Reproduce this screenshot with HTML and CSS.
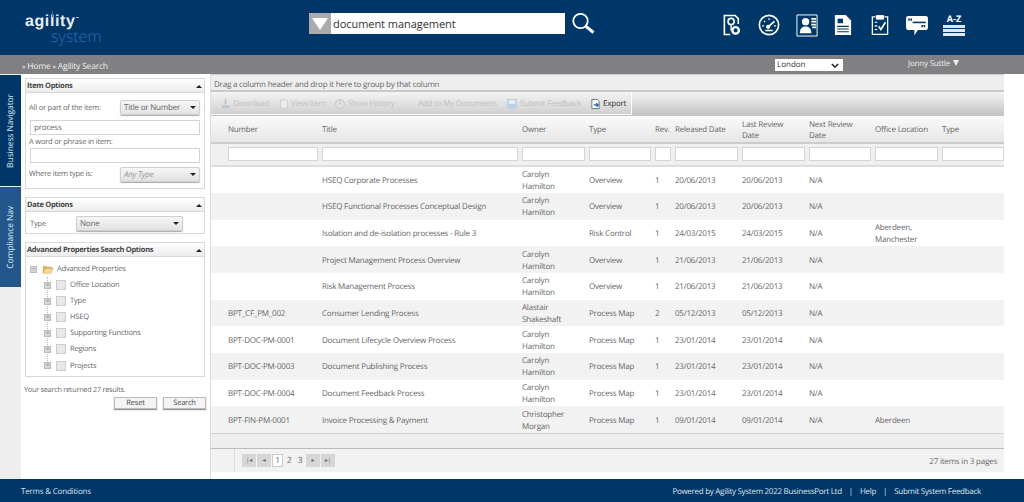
FILE: index.html
```html
<!DOCTYPE html>
<html lang="en">
<head>
    <meta charset="UTF-8">
    <title>Agility Search</title>
    <link rel="stylesheet" href="styles.css">
</head>
<body>
    <header class="top-bar">
        <div class="logo">
            <div class="logo-main">agility<span class="logo-tm"></span></div>
            <div class="logo-sub">system</div>
        </div>
        <div class="search-box">
            <div class="search-drop"><span class="search-arrow"></span></div>
            <div class="search-text">document management</div>
            <svg class="search-icon" viewBox="0 0 24 24" width="24" height="24" fill="none" stroke="#fff"><circle cx="9.5" cy="9" r="7.2" stroke-width="1.8"/><path d="M15 14.500l7.500 6" stroke-width="3"/></svg>
        </div>
        <nav class="top-icons">
            <svg class="icon-a" viewBox="0 0 20 24" width="18" height="22" fill="none" stroke="#fff" stroke-width="1.800"><path d="M8 22.500H1.500V1.500h12l3.500 3.500v6"/><circle cx="9" cy="8" r="3.400"/><circle cx="14" cy="18" r="3.600" stroke-width="2.600"/><path d="M9 12v6" stroke-width="1.500"/></svg>
            <svg class="icon-b" viewBox="0 0 24 24" width="22" height="22" fill="none" stroke="#fff"><circle cx="12" cy="12" r="10.500" stroke-width="1.800"/><path d="M11 14l7-6" stroke-width="2"/><circle cx="11" cy="14" r="1.800" fill="#fff"/><path d="M4.500 13h2M12 4.500v2M6.500 7.500l1.400 1.400M17.500 13h2M8 18h8" stroke-width="1.400"/></svg>
            <svg class="icon-c" viewBox="0 0 24 24" width="23" height="23" fill="none" stroke="#fff"><path d="M1 1h21v22H1z" stroke-width="1"/><circle cx="10" cy="8" r="3.800" fill="#fff" stroke="none"/><path d="M4 20c0-5.500 3-7 6-7s6 1.500 6 7z" fill="#fff" stroke="none"/><path d="M16 5h5M16 8h5M16 11h5M17 14h4" stroke-width="1.800"/></svg>
            <svg class="icon-d" viewBox="0 0 20 24" width="18" height="22" fill="#fff"><path d="M1 1h12l6 6v16H1z"/><path d="M4 5h6v5H4z" fill="#003768"/><path d="M3.500 13.500h13M3.500 16.500h13M3.500 19.500h13" stroke="#003768" stroke-width="1.200"/></svg>
            <svg class="icon-e" viewBox="0 0 20 24" width="18" height="22" fill="none" stroke="#fff"><path d="M5 3H1.500v19.500h17V3H15" stroke-width="1.400"/><path d="M6 1.500h8v4H6z" fill="#fff"/><path d="M4 9h3M4 13h3M4 17h3" stroke-width="1.200"/><path d="M8.500 13.500l2.500 3.500 5-8" stroke-width="1.800"/></svg>
            <svg class="icon-f" viewBox="0 0 26 24" width="24" height="21" fill="#fff"><path d="M3 1h20q2.500 0 2.500 2.500v11q0 2.500-2.500 2.500H14l-4 6v-6H3Q.5 17 .5 14.500v-11Q.5 1 3 1z"/><path d="M8 8.500h15" stroke="#003768" stroke-width="1.800"/><path d="M3 4h1.800v2.500H3zM5.500 4h1.800v2.500H5.500zM18 11.500h1.800V14H18zM20.500 11.500h1.800V14h-1.800z" fill="#003768"/></svg>
            <div class="az-icon">
                <div class="az-text">A-Z</div>
                <div class="az-bar"></div>
                <div class="az-bar"></div>
                <div class="az-bar"></div>
            </div>
        </nav>
    </header>

    <div class="crumb-bar">
        <div class="crumbs"><span class="crumb-sep">»</span> Home <span class="crumb-sep">»</span> Agility Search</div>
        <div class="site-select">London<svg viewBox="0 0 10 6" width="8" height="5" fill="none" stroke="#222" stroke-width="1.800"><path d="M1 1l4 4 4-4"/></svg></div>
        <div class="user-menu">Jonny Suttle <span class="user-arrow"></span></div>
    </div>

    <main class="page">
        <aside class="side-tabs">
            <div class="side-tab tab-dark"><span>Business Navigator</span></div>
            <div class="side-tab tab-light"><span>Compliance Nav</span></div>
        </aside>

        <section class="search-col">
            <div class="panel panel-item">
                <div class="panel-head">Item Options<span class="collapse"></span></div>
                <div class="panel-body">
                    <div class="form-row">
                        <span>All or part of the item:</span>
                        <div class="combo combo-item">Title or Number<span class="combo-arrow"></span></div>
                    </div>
                    <div class="text-box box-first">process</div>
                    <div class="field-label">A word or phrase in item:</div>
                    <div class="text-box"></div>
                    <div class="form-row row-type">
                        <span>Where item type is:</span>
                        <div class="combo combo-item"><em>Any Type</em><span class="combo-arrow"></span></div>
                    </div>
                </div>
            </div>

            <div class="panel panel-date">
                <div class="panel-head">Date Options<span class="collapse"></span></div>
                <div class="date-row">
                    <span class="date-label">Type</span>
                    <div class="combo combo-date">None<span class="combo-arrow"></span></div>
                </div>
            </div>

            <div class="panel panel-adv">
                <div class="panel-head">Advanced Properties Search Options<span class="collapse"></span></div>
                <div class="tree">
                    <div class="tree-root">
                        <span class="expander">−</span>
                        <svg class="folder" viewBox="0 0 14 11" width="12" height="10"><path d="M1 2h4l1 1h6v2H4L1 10z" fill="#d9b25c"/><path d="M3.500 5H13l-2.500 5.500H1z" fill="#f3d98f" stroke="#b9924a" stroke-width=".5"/></svg>
                        Advanced Properties
                    </div>
                    <div class="tree-kids" id="tree-kids"></div>
                </div>
            </div>

            <div class="result-note">Your search returned 27 results.</div>
            <div class="search-btns">
                <div class="btn">Reset</div>
                <div class="btn">Search</div>
            </div>
        </section>

        <section class="grid">
            <div class="group-bar">Drag a column header and drop it here to group by that column</div>
            <div class="tool-bar">
                <div class="tools">
                    <span class="tool off tool-download"><svg viewBox="0 0 12 12" width="11" height="11"><path d="M2 8h8v3H2z" fill="#b9c6d4"/><path d="M6 1v6" stroke="#b9c6d4" stroke-width="2"/></svg>Download</span>
                    <span class="tool off tool-view"><svg viewBox="0 0 12 12" width="10" height="12" fill="#eee" stroke="#c6c6c6"><path d="M2 1h6l2 2v8H2z"/></svg>View Item</span>
                    <span class="tool off tool-history"><svg viewBox="0 0 12 12" width="12" height="12" fill="#e2e2e2" stroke="#c6c6c6"><circle cx="6" cy="6" r="4.500"/><path d="M6 3v3h2.500" fill="none"/></svg>Show History</span>
                    <span class="tool off tool-add">Add to My Documents</span>
                    <span class="tool off tool-feedback"><svg viewBox="0 0 12 12" width="12" height="12"><path d="M1 1h10v10H1z" fill="#bcd0e6"/><path d="M3 2h6v4H3z" fill="#e4edf6"/></svg>Submit Feedback</span>
                    <span class="tool"><svg viewBox="0 0 12 12" width="11" height="12" fill="#fff" stroke="#5a6d85"><path d="M2 1h6l2 2v8H2z"/><path d="M4 7h5M7 5l2 2-2 2" stroke="#1f5da8" fill="none" stroke-width="1.300"/></svg>Export</span>
                </div>
            </div>
            <table class="results">
                <colgroup>
                    <col class="c-gap"><col class="c-num"><col class="c-title"><col class="c-owner"><col class="c-type"><col class="c-rev"><col class="c-date"><col class="c-date"><col class="c-next"><col class="c-date"><col class="c-last">
                </colgroup>
                <thead>
                    <tr class="head-row">
                        <th></th><th>Number</th><th>Title</th><th>Owner</th><th>Type</th><th>Rev.</th><th>Released Date</th><th>Last Review Date</th><th>Next Review Date</th><th>Office Location</th><th>Type</th>
                    </tr>
                    <tr class="filter-row">
                        <td></td><td><input></td><td><input></td><td><input></td><td><input></td><td><input></td><td><input></td><td><input></td><td><input></td><td><input></td><td><input></td>
                    </tr>
                </thead>
                <tbody id="rows"></tbody>
            </table>
            <div class="grid-foot"></div>
            <div class="pager">
                <div class="pager-nums">
                    <span class="pg-btn">|◂</span><span class="pg-btn">◂</span><span class="pg-num pg-on">1</span><span class="pg-num">2</span><span class="pg-num">3</span><span class="pg-btn">▸</span><span class="pg-btn">▸|</span>
                </div>
                <div class="pager-info">27 items in 3 pages</div>
            </div>
        </section>
    </main>

    <footer class="page-foot">
        <div>Terms &amp; Conditions</div>
        <div class="foot-links">Powered by Agility System 2022 BusinessPort Ltd<i>|</i>Help<i>|</i>Submit System Feedback</div>
    </footer>

    <script>
        // rows of the results table
        const ch = "Carolyn Hamilton";
        const rows = [
            ["", "HSEQ Corporate Processes", ch, "Overview", "1", "20/06/2013", "20/06/2013", ""],
            ["", "HSEQ Functional Processes Conceptual Design", ch, "Overview", "1", "20/06/2013", "20/06/2013", ""],
            ["", "Isolation and de-isolation processes - Rule 3", "", "Risk Control", "1", "24/03/2015", "24/03/2015", "Aberdeen, Manchester"],
            ["", "Project Management Process Overview", ch, "Overview", "1", "21/06/2013", "21/06/2013", ""],
            ["", "Risk Management Process", ch, "Overview", "1", "21/06/2013", "21/06/2013", ""],
            ["BPT_CF_PM_002", "Consumer Lending Process", "Alastair Shakeshaft", "Process Map", "2", "05/12/2013", "05/12/2013", ""],
            ["BPT-DOC-PM-0001", "Document Lifecycle Overview Process", ch, "Process Map", "1", "23/01/2014", "23/01/2014", ""],
            ["BPT-DOC-PM-0003", "Document Publishing Process", ch, "Process Map", "1", "23/01/2014", "23/01/2014", ""],
            ["BPT-DOC-PM-0004", "Document Feedback Process", ch, "Process Map", "1", "23/01/2014", "23/01/2014", ""],
            ["BPT-FIN-PM-0001", "Invoice Processing & Payment", "Christopher Morgan", "Process Map", "1", "09/01/2014", "09/01/2014", "Aberdeen"]
        ];

        const body = document.getElementById('rows');
        rows.forEach(function(r) {
            const row = body.insertRow();
            const cells = ["", r[0], r[1], r[2], r[3], r[4], r[5], r[6], "N/A", r[7], ""];
            cells.forEach(function(text) {
                row.insertCell().textContent = text;
            });
        });

        const kids = ["Office Location", "Type", "HSEQ", "Supporting Functions", "Regions", "Projects"];
        const tree = document.getElementById('tree-kids');
        kids.forEach(function(name) {
            const node = document.createElement('div');
            node.className = 'tree-node';
            node.innerHTML = '<span class="expander">+</span><span class="tick"></span>' + name;
            tree.appendChild(node);
        });
    </script>
</body>
</html>
```

FILE: styles.css
```css
* {
    box-sizing: border-box;
}
html, body {
    height: 100%;
}
body {
    margin: 0;
    font-family: "Open Sans", Arial, sans-serif;
    font-size: 8px;
    letter-spacing: -.2px;
    text-rendering: geometricPrecision;
    color: #666;
    background-color: #fff;
    display: flex;
    flex-direction: column;
    overflow: hidden;
}

/* header */
.top-bar {
    height: 55px;
    background-color: #003768;
    display: flex;
    color: white;
    flex-shrink: 0;
}
.logo {
    width: 309px;
    padding: 14px 0 0 25px;
}
.logo-main {
    position: relative;
    font-family: "Liberation Sans", Arial, sans-serif;
    font-size: 16px;
    font-weight: bold;
    line-height: 16px;
    letter-spacing: .6px;
    color: #e8eef4;
}
.logo-main::before {
    content: "";
    position: absolute;
    left: 27px;
    top: -3px;
    width: 1px;
    height: 6px;
    background-color: #2a6cb0;
}
.logo-tm {
    display: inline-block;
    width: 3px;
    height: 1px;
    margin-left: 1px;
    vertical-align: 8px;
    background-color: #9fb3c6;
}
.logo-sub {
    font-size: 16px;
    line-height: 13px;
    margin-left: 26px;
    color: #2a6cb0;
    font-weight: 300;
    letter-spacing: 0;
    width: 60px;
}
.search-box {
    display: flex;
    align-items: center;
    height: 21px;
    margin-top: 13px;
}
.search-drop {
    width: 22px;
    height: 21px;
    background-color: #a9abae;
    padding: 5px 0 0 3px;
}
.search-arrow {
    display: block;
    width: 0;
    border-left: 8px solid transparent;
    border-right: 8px solid transparent;
    border-top: 12px solid white;
}
.search-text {
    width: 234px;
    height: 21px;
    background-color: white;
    color: #333;
    font-size: 11px;
    letter-spacing: -.05px;
    line-height: 24px;
    padding-left: 2px;
}
.search-icon {
    margin-left: 6px;
}
.top-icons {
    display: flex;
    align-items: center;
    height: 55px;
    margin-left: 128px;
    padding-bottom: 5px;
}
.top-icons svg, .az-icon {
    flex-shrink: 0;
}
.icon-b { margin-left: 17px; }
.icon-c { margin-left: 16px; }
.icon-d { margin-left: 15px; }
.icon-e { margin-left: 19px; }
.icon-f { margin-left: 16px; }
.az-icon {
    width: 22px;
    margin-left: 14px;
}
.az-text {
    font-size: 9px;
    line-height: 9px;
    font-weight: bold;
    letter-spacing: 0;
    text-align: center;
    margin-bottom: 2px;
}
.az-bar {
    height: 3px;
    margin-top: 1px;
    background-color: #dfe6ee;
}

/* breadcrumb */
.crumb-bar {
    height: 19px;
    background-color: #808082;
    color: #eee;
    font-size: 8.500px;
    display: flex;
    flex-shrink: 0;
}
.crumbs {
    padding: 6px 0 0 22px;
    width: 775px;
}
.crumb-sep {
    font-size: 7px;
}
.site-select {
    width: 68px;
    height: 12px;
    margin-top: 4px;
    background-color: white;
    color: #333;
    font-size: 8px;
    letter-spacing: 0;
    line-height: 12px;
    padding: 0 4px 0 2px;
    display: flex;
    justify-content: space-between;
    align-items: center;
}
.user-menu {
    margin-left: 65px;
    padding-top: 3px;
    font-size: 8px;
}
.user-arrow {
    display: inline-block;
    margin-left: 1px;
    border-left: 3.500px solid transparent;
    border-right: 3.500px solid transparent;
    border-top: 6px solid #eee;
}

/* main area */
.page {
    flex: 1;
    display: flex;
    min-height: 0;
}
.side-tabs {
    width: 21px;
    background-color: #eee;
    flex-shrink: 0;
}
.side-tab {
    display: flex;
    align-items: center;
    justify-content: center;
    color: #dfe8f0;
    font-size: 8.500px;
    letter-spacing: -.1px;
}
.side-tab span {
    writing-mode: vertical-rl;
    transform: rotate(180deg);
    white-space: nowrap;
}
.tab-dark {
    height: 111px;
    margin-top: 1px;
    background-color: #003768;
}
.tab-light {
    height: 100px;
    margin-top: 1px;
    background-color: #23578c;
}

/* search column */
.search-col {
    width: 190px;
    flex-shrink: 0;
    padding: 4px 5px 0 4px;
    border-right: 1px solid #ddd;
    font-size: 7.500px;
}
.panel {
    border: 1px solid #d8d8d8;
    margin-bottom: 8px;
}
.panel-item { height: 111px; }
.panel-date { height: 37px; }
.panel-adv { height: 135px; margin-bottom: 0; }
.panel-head {
    height: 14px;
    line-height: 13px;
    padding: 1px 0 0 1px;
    font-weight: bold;
    font-size: 7.500px;
    letter-spacing: -.3px;
    color: #444;
    background: linear-gradient(#fff, #ececec);
    border-bottom: 1px solid #d8d8d8;
    display: flex;
    justify-content: space-between;
    align-items: center;
}
.collapse {
    margin-right: 2px;
    border-left: 3px solid transparent;
    border-right: 3px solid transparent;
    border-bottom: 3px solid #222;
}
.panel-body {
    padding: 7px 3px 0 3px;
}
.form-row {
    display: flex;
    justify-content: space-between;
    align-items: center;
    height: 15px;
}
.row-type {
    margin-top: 3px;
    height: 16px;
}
.combo {
    height: 15px;
    background: linear-gradient(#f6f6f6, #e2e2e2);
    border: 1px solid #cfcfcf;
    border-radius: 2px;
    box-shadow: 0 1px 1px #aaa;
    padding: 0 3px;
    font-size: 8px;
    display: flex;
    align-items: center;
    justify-content: space-between;
}
.combo em {
    color: #999;
}
.combo-item { width: 80px; margin-right: 1px; }
.combo-date { width: 107px; margin-left: 20px; padding-left: 3px; }
.combo-arrow {
    border-left: 3px solid transparent;
    border-right: 3px solid transparent;
    border-top: 3px solid #222;
}
.text-box {
    height: 15px;
    width: 170px;
    margin-left: 1px;
    border: 1px solid #d4d4d4;
    background-color: white;
    padding-left: 3px;
    font-size: 8px;
    line-height: 14px;
}
.box-first {
    margin-top: 5px;
}
.field-label {
    height: 13px;
    line-height: 15px;
}
.date-row {
    display: flex;
    align-items: center;
    padding: 4px 0 0 4px;
}
.date-label {
    width: 26px;
}
.tree {
    padding: 4px 0 0 4px;
    font-size: 7.500px;
}
.tree-root {
    display: flex;
    align-items: center;
    height: 16px;
}
.folder {
    margin: 0 3px 0 5px;
}
.expander {
    width: 7px;
    height: 7px;
    background-color: #d6d6d6;
    border: 1px solid #bbb;
    font-size: 6px;
    line-height: 5px;
    text-align: center;
    color: #555;
    overflow: hidden;
    flex-shrink: 0;
}
.tree-kids {
    margin-left: 17px;
    border-left: 1px dotted #bbb;
    width: 130px;
    height: 90px;
}
.tree-node {
    display: flex;
    align-items: center;
    height: 16.100px;
    margin-left: -4px;
}
.tick {
    width: 10px;
    height: 10px;
    background-color: #e8e8e8;
    border: 1px solid #ccc;
    margin: 0 4px 0 5px;
    flex-shrink: 0;
}
.result-note {
    margin: 8px 0 0 -1px;
    font-size: 7.200px;
    height: 11px;
    line-height: 11px;
}
.search-btns {
    display: flex;
    justify-content: flex-end;
    gap: 6px;
    margin: 1px -1px 0 0;
}
.btn {
    width: 43px;
    height: 12px;
    border: 1px solid #bbb;
    background-color: #f4f4f4;
    box-shadow: 0 1px 1px #999;
    text-align: center;
    line-height: 10px;
    color: #444;
}

/* results grid */
.grid {
    width: 793px;
    flex-shrink: 0;
    height: 398px;
    background-color: #f0f0f0;
    display: flex;
    flex-direction: column;
}
.group-bar {
    height: 18px;
    padding: 4px 0 0 3px;
    background-color: #eee;
    border-top: 1px solid #ccc;
    border-bottom: 2px solid #c9c9c9;
}
.tool-bar {
    height: 24px;
    background: linear-gradient(#f4f4f4, #c2c2c2);
}
.tools {
    width: 421px;
    height: 23px;
    padding: 1px 0 0 9px;
    background: linear-gradient(#f4f4f4, #d0d0d0);
    border-right: 1px solid #fff;
    border-bottom: 1px solid #fff;
    display: flex;
    align-items: center;
}
.tool {
    display: flex;
    align-items: center;
    gap: 2px;
    white-space: nowrap;
    color: #333;
}
.tool.off {
    color: #c0c0c0;
}
.tool-download { width: 59px; }
.tool-view { width: 55px; }
.tool-history { width: 84px; }
.tool-add { width: 88px; }
.tool-feedback { width: 84px; }
.results {
    width: 793px;
    table-layout: fixed;
    border-collapse: collapse;
    background-color: white;
}
.c-gap { width: 13px; }
.c-num { width: 94px; }
.c-title { width: 200px; }
.c-owner { width: 67px; }
.c-type { width: 66px; }
.c-rev { width: 20px; }
.c-date { width: 67px; }
.c-next { width: 66px; }
.c-last { width: 66px; }
.results th {
    height: 27px;
    font-weight: normal;
    text-align: left;
    padding: 2px 8px 0 4px;
    line-height: 11px;
    color: #666;
    background: linear-gradient(#fafafa, #e6e6e6);
    border-bottom: 2px solid #ccc;
}
.filter-row td {
    height: 23px;
    padding: 0 0 0 4px;
    background-color: #f0f0f0;
    border-bottom: 2px solid #ddd;
}
.filter-row input {
    display: block;
    width: 100%;
    height: 14px;
    padding: 0;
    border: 1px solid #d4d4d4;
    background-color: white;
}
tbody td {
    height: 26.700px;
    padding: 2px 4px 0;
    line-height: 12px;
    overflow: hidden;
}
tbody tr:nth-child(even) td {
    background-color: #f2f2f2;
}
.grid-foot {
    height: 15px;
    border-top: 1px solid #d4d4d4;
    background-color: #eee;
}
.pager {
    height: 24px;
    border-top: 1px solid #bbb;
    background-color: #f2f2f2;
    display: flex;
    justify-content: space-between;
    align-items: center;
    padding: 0 7px 0 23px;
}
.pager-nums {
    display: flex;
    align-items: center;
    gap: 1px;
    height: 23px;
    padding-left: 7px;
    border-left: 1px solid #ddd;
}
.pager-info {
    padding-top: 1px;
}
.pg-btn {
    width: 14px;
    height: 13px;
    background-color: #d6d6d6;
    font-size: 6px;
    line-height: 13px;
    text-align: center;
    color: #666;
}
.pg-num {
    width: 10px;
    height: 13px;
    line-height: 13px;
    text-align: center;
    font-size: 8.500px;
}
.pg-on {
    width: 11px;
    background-color: white;
    border: 1px solid #ccc;
    line-height: 11px;
}

/* footer */
.page-foot {
    height: 23px;
    flex-shrink: 0;
    background-color: #003768;
    color: #dde5ee;
    font-size: 8px;
    display: flex;
    justify-content: space-between;
    align-items: center;
    padding: 1px 43px 0 21px;
}
.foot-links {
    letter-spacing: -.28px;
}
.foot-links i {
    font-style: normal;
    margin: 0 7px;
}
```
